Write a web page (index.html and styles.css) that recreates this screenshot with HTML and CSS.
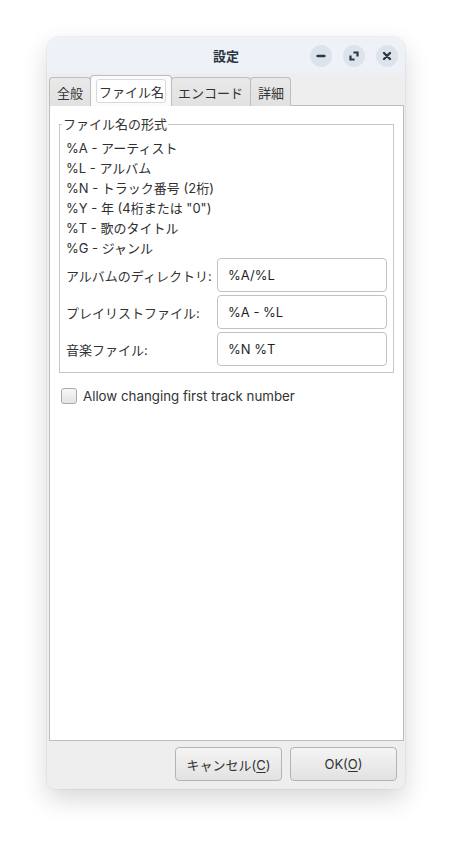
FILE: index.html
```html
<!DOCTYPE html>
<html lang="ja">
<head>
<meta charset="utf-8">
<title>設定</title>
<link rel="stylesheet" href="styles.css">
</head>
<body>
<div class="window">
  <header class="titlebar">
    <div class="title">設定</div>
    <div class="controls">
      <span class="ctl"><svg width="22" height="22" viewBox="0 0 22 22"><path d="M7.5 11h7" stroke="#2b3645" stroke-width="2.4" stroke-linecap="round"/></svg></span>
      <span class="ctl"><svg width="22" height="22" viewBox="0 0 22 22"><path d="M11.5 7.5h3v3M10.5 14.5h-3v-3" fill="none" stroke="#2b3645" stroke-width="2.2" stroke-linecap="square"/></svg></span>
      <span class="ctl"><svg width="22" height="22" viewBox="0 0 22 22"><path d="M8 8l6 6M14 8l-6 6" stroke="#2b3645" stroke-width="2.4" stroke-linecap="round"/></svg></span>
    </div>
  </header>
  <div class="body">
    <nav class="tabs">
      <div class="tab">全般</div>
      <div class="tab active"><span class="focus">ファイル名</span></div>
      <div class="tab">エンコード</div>
      <div class="tab">詳細</div>
    </nav>
    <section class="panel">
      <fieldset class="group">
        <legend>ファイル名の形式</legend>
        <ul class="formats">
          <li>%A - アーティスト</li>
          <li>%L - アルバム</li>
          <li>%N - トラック番号 (2桁)</li>
          <li>%Y - 年 (4桁または "0")</li>
          <li>%T - 歌のタイトル</li>
          <li>%G - ジャンル</li>
        </ul>
        <div class="fields">
          <label class="lbl">アルバムのディレクトリ:</label>
          <div class="input">%A/%L</div>
          <label class="lbl">プレイリストファイル:</label>
          <div class="input">%A - %L</div>
          <label class="lbl">音楽ファイル:</label>
          <div class="input">%N %T</div>
        </div>
      </fieldset>
      <div class="check">
        <span class="box"></span>
        <span class="check-text">Allow changing first track number</span>
      </div>
    </section>
    <footer class="buttons">
      <button class="btn">キャンセル(<u>C</u>)</button>
      <button class="btn">OK(<u>O</u>)</button>
    </footer>
  </div>
</div>
</body>
</html>
```

FILE: styles.css
```css
* { box-sizing: border-box; }
html, body { margin: 0; padding: 0; background: #ffffff; }
body {
  width: 452px;
  height: 846px;
  padding: 37px 0 0 47px;
  font-family: Inter, "Noto Sans CJK JP", sans-serif;
  font-size: 13px;
  color: #2f2f2f;
}
.window {
  width: 358px;
  height: 752px;
  border-radius: 12px 12px 8px 8px;
  background: #eeeeee;
  box-shadow: 0 10px 26px rgba(0,0,0,0.16), 0 0 0 1px rgba(0,0,0,0.04);
  display: flex;
  flex-direction: column;
  overflow: hidden;
}
.titlebar {
  height: 36px;
  flex: 0 0 36px;
  background: #eef2f8;
  display: flex;
  align-items: center;
  justify-content: flex-end;
  position: relative;
  padding-right: 7px;
}
.title {
  position: absolute;
  left: 0; right: 0; top: 0;
  line-height: 38px;
  text-align: center;
  font-weight: 700;
  font-size: 13px;
  color: #2b3440;
}
.controls { display: flex; gap: 11px; padding-top: 2px; }
.ctl {
  width: 22px; height: 22px;
  border-radius: 50%;
  background: #dde3eb;
  display: block;
}
.ctl svg { display: block; }
.body {
  flex: 1;
  display: flex;
  flex-direction: column;
  padding: 2px 2px 8px 2px;
}
.tabs {
  display: flex;
  align-items: flex-end;
  height: 31px;
  margin-bottom: -1px;
  position: relative;
  z-index: 1;
}
.tab {
  height: 29px;
  padding: 0 4px 0 7px;
  display: flex;
  align-items: center;
  border: 1px solid #bdbdbd;
  border-bottom: none;
  border-radius: 4px 4px 0 0;
  background: linear-gradient(#e9e9e9, #e1e1e1);
  color: #333;
  font-size: 13px;
  margin-right: -1px;
}
.tab:first-child { width: 42px; }
.tab:nth-child(3) { width: 80px; padding-left: 6px; }
.tab:nth-child(4) { width: 41px; }
.tab.active {
  height: 31px;
  width: 82px;
  background: #fbfbfb;
  padding: 3px 5px 3px 5px;
  align-items: stretch;
}
.focus {
  flex: 1;
  background: #ffffff;
  border: 1px solid #d9d9d9;
  border-radius: 3px;
  display: flex;
  align-items: center;
  padding-left: 2px;
}
.panel {
  flex: 1;
  background: #ffffff;
  border: 1px solid #bcbcbc;
  margin-right: -1px;
  padding: 10px 9px 0 9px;
}
.group {
  margin: 0;
  border: 1px solid #c6c6c6;
  padding: 5px 6px 6px 6px;
  min-width: 0;
}
.group legend {
  padding: 0 1px;
  margin-left: -4px;
  line-height: 17px;
  color: #333;
}
.formats {
  list-style: none;
  margin: 0;
  padding: 0;
}
.formats li {
  line-height: 20px;
  height: 20px;
}
.fields {
  display: grid;
  grid-template-columns: 1fr 170px;
  row-gap: 3px;
  align-items: center;
}
.lbl { color: #333; }
.input {
  height: 34px;
  border: 1px solid #c2c2c2;
  border-radius: 4px;
  background: #fff;
  padding-left: 10px;
  display: flex;
  align-items: center;
  color: #1f1f1f;
}
.check {
  display: flex;
  align-items: center;
  margin: 15px 0 0 2px;
  gap: 6px;
}
.box {
  width: 16px; height: 16px;
  border: 1px solid #a9a9a9;
  border-radius: 3px;
  background: linear-gradient(#f7f7f7, #e4e4e4);
}
.check-text { color: #333; font-size: 13.3px; }
.buttons {
  display: flex;
  justify-content: flex-end;
  gap: 8px;
  padding: 6px 6px 0 0;
}
.btn {
  width: 107px;
  height: 34px;
  border: 1px solid #b4b4b4;
  border-radius: 4px;
  background: linear-gradient(#f4f4f4, #e2e2e2);
  font-family: Inter, "Noto Sans CJK JP", sans-serif;
  font-size: 13px;
  color: #333;
  padding: 0;
}
.btn u { text-underline-offset: 2px; }
```
